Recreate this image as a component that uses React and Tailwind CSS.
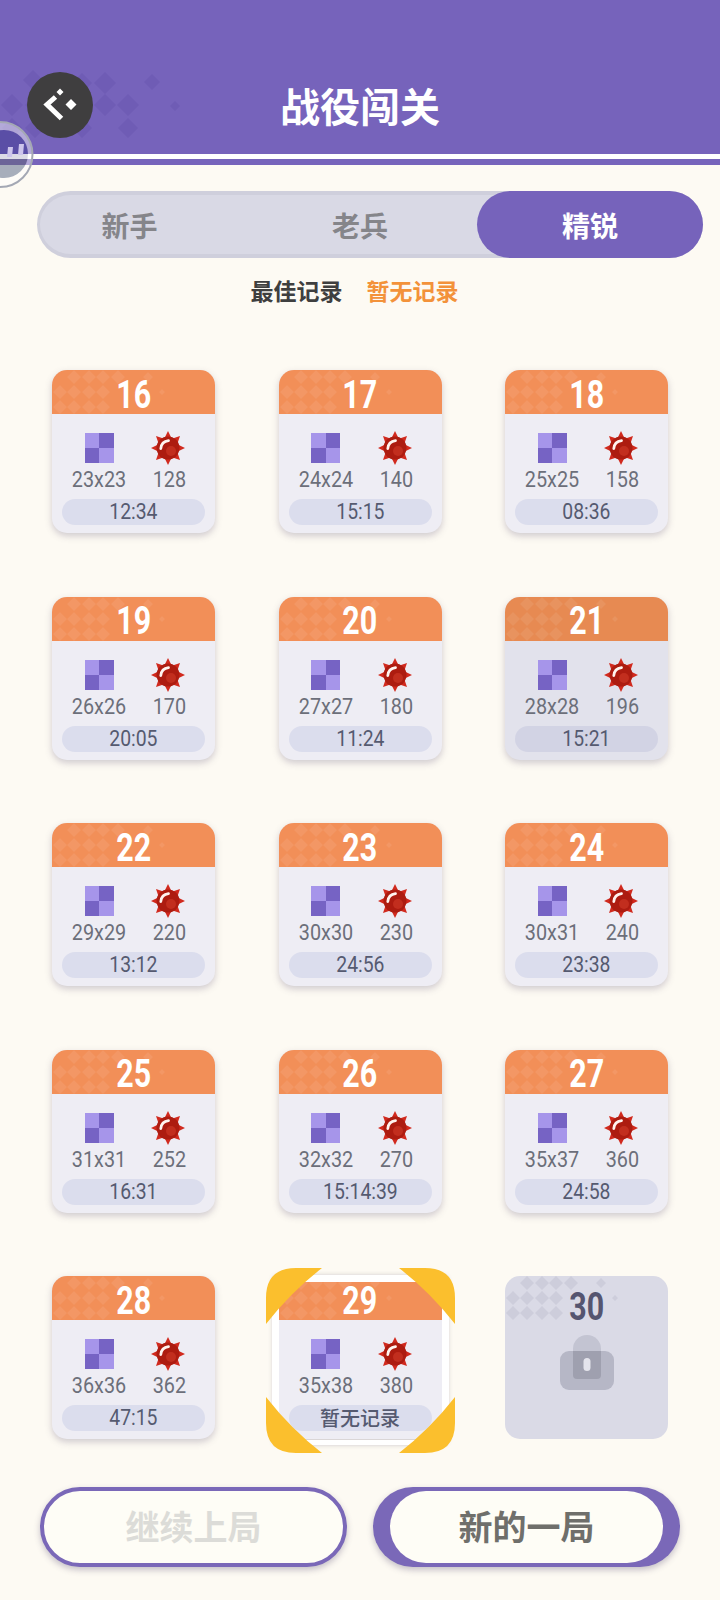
import React from "react";

const cjk = "font-['Noto_Sans_CJK_SC','Noto_Sans',sans-serif]";
const num = "font-['Roboto','Noto_Sans_CJK_SC',sans-serif]";

const levels = [
    { id: 16, size: "23x23", mines: 128, best: "12:34" },
    { id: 17, size: "24x24", mines: 140, best: "15:15" },
    { id: 18, size: "25x25", mines: 158, best: "08:36" },
    { id: 19, size: "26x26", mines: 170, best: "20:05" },
    { id: 20, size: "27x27", mines: 180, best: "11:24" },
    { id: 21, size: "28x28", mines: 196, best: "15:21", pressed: true },
    { id: 22, size: "29x29", mines: 220, best: "13:12" },
    { id: 23, size: "30x30", mines: 230, best: "24:56" },
    { id: 24, size: "30x31", mines: 240, best: "23:38" },
    { id: 25, size: "31x31", mines: 252, best: "16:31" },
    { id: 26, size: "32x32", mines: 270, best: "15:14:39" },
    { id: 27, size: "35x37", mines: 360, best: "24:58" },
    { id: 28, size: "36x36", mines: 362, best: "47:15" },
    { id: 29, size: "35x38", mines: 380, best: null, current: true },
    { id: 30, locked: true },
];

// [x, y, half width] for the little diamonds behind the level number
const cardDiamonds = [
    [22, 7, 7], [37, 7, 7], [51, 7, 7], [66, 7, 7], [96, 7, 5],
    [8, 22, 7], [22, 22, 7], [37, 22, 7], [51, 22, 7], [110, 22, 3],
    [8, 37, 7], [22, 37, 7], [37, 37, 7], [51, 37, 7],
];

const headerDiamonds = [
    [33, 80, 10], [82, 83, 10], [105, 83, 11], [152, 82, 8],
    [12, 105, 11], [35, 105, 10], [58, 105, 10], [82, 105, 10], [105, 105, 11], [128, 105, 11], [175, 106, 5],
    [12, 128, 10], [35, 128, 10], [82, 128, 10], [128, 128, 10],
];

function diamondPath(list) {
    return list.map(([x, y, r]) => `M${x - r} ${y}L${x} ${y - r}L${x + r} ${y}L${x} ${y + r}Z`).join("");
}

function minePoints() {
    const pts = [];
    for (let i = 0; i < 16; i++) {
        const r = i % 2 === 0 ? 17 : 10;
        const a = (i * Math.PI) / 8;
        pts.push(`${(17 + r * Math.sin(a)).toFixed(1)},${(17 - r * Math.cos(a)).toFixed(1)}`);
    }
    return pts.join(" ");
}

function BoardIcon() {
    return (
        <div className="grid grid-cols-2 w-[29px] h-[30px]">
            <div className="bg-[#a695ea]" />
            <div className="bg-[#7663c4]" />
            <div className="bg-[#7663c4]" />
            <div className="bg-[#a695ea]" />
        </div>
    );
}

function MineIcon() {
    return (
        <svg width="34" height="34" viewBox="0 0 34 34">
            <polygon points={minePoints()} fill="#d12a1e" />
            <circle cx="17" cy="17" r="11.5" fill="#ad1c10" />
            <circle cx="20" cy="20" r="5" fill="#c22e1e" />
            <path d="M9.8 17.5C10.2 13 13 10.2 17.5 9.6" fill="none" stroke="#fff4ef" strokeWidth="2.8" strokeLinecap="round" />
        </svg>
    );
}

function LevelCard({ level }) {
    const { id, size, mines, best, pressed, current } = level;
    return (
        <div className="relative w-[163px] h-[163px]">
            <div
                className={`w-full h-full rounded-[15px] overflow-hidden flex flex-col shadow-[0_3px_7px_rgba(90,80,110,0.28)] ${
                    pressed ? "bg-[#e2e2ec]" : "bg-[#eeedf4]"
                }`}
            >
                <div className={`relative h-[44px] flex items-center justify-center ${pressed ? "bg-[#e78a52]" : "bg-[#f28f58]"}`}>
                    <svg className="absolute left-0 top-0" width="163" height="44">
                        <path d={diamondPath(cardDiamonds)} fill="#ffffff" fillOpacity="0.08" />
                    </svg>
                    <span className={`relative inline-block scale-x-[0.8] mt-[5px] text-white text-[38px] font-bold leading-none ${num}`}>{id}</span>
                </div>
                <div className="flex justify-between pl-[14px] pr-[30px] mt-[19px] h-[30px]">
                    <div className="w-[66px] flex justify-center"><BoardIcon /></div>
                    <div className="w-[34px] flex justify-center -mt-[2px]"><MineIcon /></div>
                </div>
                <div className="flex justify-between pl-[14px] pr-[30px] mt-[5px]">
                    <span className={`w-[66px] text-center whitespace-nowrap inline-block scale-x-90 text-[22px] font-[450] leading-[24px] text-[#6c6f7a] ${num}`}>{size}</span>
                    <span className={`w-[34px] text-center inline-block scale-x-90 text-[22px] font-[450] leading-[24px] text-[#6c6f7a] ${num}`}>{mines}</span>
                </div>
                <div
                    className={`mx-[10px] mt-[7px] h-[26px] rounded-full flex items-center justify-center text-[#555a70] ${
                        pressed ? "bg-[#d2d3e4]" : "bg-[#dbdded]"
                    }`}
                >
                    {best ? (
                        <span className={`inline-block scale-x-[0.88] text-[22px] font-[450] leading-none ${num}`}>{best}</span>
                    ) : (
                        <span className={`text-[20px] leading-none font-medium ${cjk}`}>暂无记录</span>
                    )}
                </div>
            </div>
            {current && <SelectionFrame />}
        </div>
    );
}

function SelectionFrame() {
    const corner = "M0 56L0 30Q0 0 30 0L56 0Q25 24 0 56Z";
    return (
        <>
            <div className="absolute -left-[7px] -right-[7px] -top-px -bottom-[6px] border-x-[7px] border-t-[7px] border-b-[5px] border-white rounded-[6px] shadow-[0_0_4px_rgba(90,80,110,0.2)]" />
            <svg className="absolute -left-[13px] -top-[8px]" width="189" height="185" viewBox="0 0 189 185">
                <path d={corner} fill="#fbbf2d" />
                <path d={corner} fill="#fbbf2d" transform="translate(189 0) scale(-1 1)" />
                <path d={corner} fill="#fbbf2d" transform="translate(0 185) scale(1 -1)" />
                <path d={corner} fill="#fbbf2d" transform="translate(189 185) scale(-1 -1)" />
            </svg>
        </>
    );
}

function LockedCard({ level }) {
    return (
        <div className="relative w-[163px] h-[163px] rounded-[15px] bg-[#dadae6] flex flex-col items-center overflow-hidden">
            <svg className="absolute left-0 top-0" width="163" height="44">
                <path d={diamondPath(cardDiamonds)} fill="#cdcddb" />
            </svg>
            <span className={`relative inline-block scale-x-[0.8] mt-[12px] text-[#555570] text-[38px] font-bold leading-none ${num}`}>{level.id}</span>
            <svg className="mt-[8px]" width="54" height="56" viewBox="0 0 54 56">
                <rect x="0" y="17" width="54" height="39" rx="9" fill="#b6b7c6" />
                <path d="M13 15a14 14 0 0 1 28 0v2H13z" fill="#c3c4d2" />
                <path d="M13 17h28v24a4 4 0 0 1-4 4H17a4 4 0 0 1-4-4z" fill="#9fa0af" />
                <rect x="23.5" y="24" width="7" height="13" rx="3.5" fill="#e4e4ec" />
            </svg>
        </div>
    );
}

function BackButton() {
    return (
        <button className="w-[66px] h-[66px] rounded-full bg-[#3f3e3f] flex items-center justify-center">
            <svg width="66" height="66" viewBox="0 0 66 66">
                <path d="M28.5 25L20 32.5L34.5 46.5" fill="none" stroke="#fff" strokeWidth="5" />
                <path d="M33 16.5L36.5 20L33 23.5L29.5 20Z M44 27L49.5 32.5L44 38L38.5 32.5Z" fill="#fff" />
            </svg>
        </button>
    );
}

function FloatingBall() {
    return (
        <svg className="absolute left-0 top-[121px]" width="36" height="68" viewBox="0 0 36 68">
            <defs>
                <clipPath id="ball-inner">
                    <circle cx="4" cy="33" r="24" />
                </clipPath>
            </defs>
            <circle cx="0" cy="33.5" r="32.5" fill="#ffffff" fillOpacity="0.45" stroke="#a4a8b4" strokeWidth="2" />
            <g clipPath="url(#ball-inner)">
                <rect x="-20" y="9" width="50" height="24" fill="#5a4ea6" />
                <rect x="-20" y="33" width="50" height="5" fill="#dcdbe6" />
                <rect x="-20" y="38" width="50" height="6" fill="#6c6598" />
                <rect x="-20" y="44" width="50" height="14" fill="#a7aebb" />
            </g>
            <path d="M8 26h5l-1 10H7z M19 23h5l-1 11h-5z" fill="#cdc5ec" />
        </svg>
    );
}

export default function App() {
    return (
        <div className={`relative w-[720px] h-[1600px] overflow-hidden bg-[#fdfaf3] ${cjk}`}>
            {/* title bar */}
            <div className="relative h-[154px] bg-[#7663bb] overflow-hidden">
                <svg className="absolute left-0 top-0" width="200" height="154">
                    <path d={diamondPath(headerDiamonds)} fill="#6f5cb5" />
                </svg>
                <div className="relative h-full flex items-end pl-[27px] pb-[16px]">
                    <BackButton />
                </div>
                <h1 className="absolute inset-x-0 top-[77px] text-center text-white text-[40px] leading-[56px] font-bold">战役闯关</h1>
            </div>
            <div className="h-[5px] bg-white" />
            <div className="h-[6px] bg-[#7663bb]" />
            <FloatingBall />

            {/* difficulty tabs */}
            <div className="mt-[26px] ml-[37px] w-[666px] h-[67px] rounded-full bg-[#d9d9e5] border-y-[4px] border-x-[3px] border-[#cfcfdc] relative">
                <div className="grid grid-cols-[205px_230px_1fr] h-full text-[28px] font-bold text-[#85858a]">
                    <div className="flex items-center justify-center pr-[26px]">新手</div>
                    <div className="flex items-center justify-center">老兵</div>
                    <div />
                </div>
                <div className="absolute -right-[3px] -top-[4px] w-[226px] h-[67px] rounded-full bg-[#7663bb] flex items-center justify-center text-[28px] font-bold text-white">
                    精锐
                </div>
            </div>

            <div className="mt-[15px] flex justify-center gap-[24px] text-[23px] leading-[34px] font-bold pr-[11px]">
                <span className="text-[#3f3f3f]">最佳记录</span>
                <span className="text-[#f3923a]">暂无记录</span>
            </div>

            {/* level grid */}
            <div className="mt-[63px] ml-[52px] grid grid-cols-[163px_163px_163px] gap-x-[63.5px] gap-y-[63.5px]">
                {levels.map((level) =>
                    level.locked ? <LockedCard key={level.id} level={level} /> : <LevelCard key={level.id} level={level} />
                )}
            </div>

            {/* bottom actions */}
            <div className="mt-[48px] ml-[40px] flex gap-[26px]">
                <button className="w-[307px] h-[80px] rounded-full bg-[#fefdf6] border-[4px] border-[#7a68b8] shadow-[0_3px_6px_rgba(70,60,100,0.3)] pb-[4px] text-[34px] font-bold text-[#dcdcd8]">
                    继续上局
                </button>
                <div className="w-[307px] h-[80px] rounded-full bg-[#7a68b8] px-[17px] py-[4px] shadow-[0_3px_6px_rgba(70,60,100,0.3)]">
                    <button className="w-full h-full rounded-full bg-[#fefdf6] pb-[4px] text-[34px] font-bold text-[#6f6f6b]">新的一局</button>
                </div>
            </div>
        </div>
    );
}
